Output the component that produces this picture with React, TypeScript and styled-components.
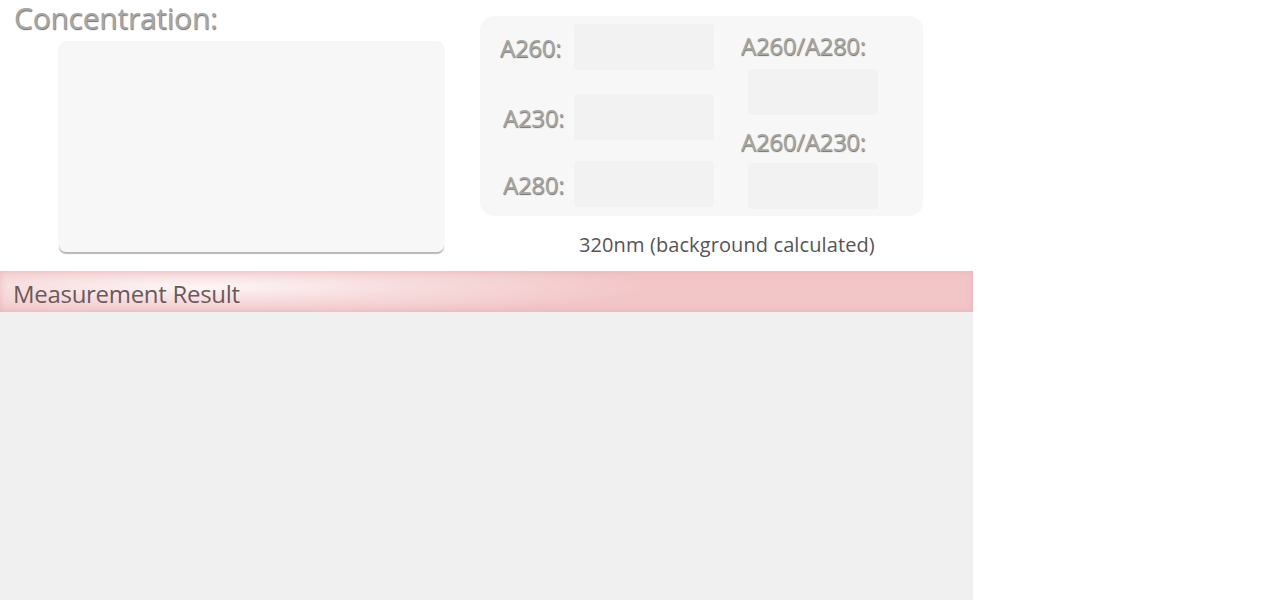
import React from "react";
import styled, { createGlobalStyle } from "styled-components";

const Global = createGlobalStyle`
  html, body { margin: 0; padding: 0; background: #ffffff; }
  body { font-family: "Open Sans", "Liberation Sans", sans-serif; }
`;

const Page = styled.div`
  width: 973px;
  display: flex;
  flex-direction: column;
`;

const Top = styled.div`
  height: 271px;
  display: flex;
  flex-direction: row;
`;

const LeftCol = styled.div`
  width: 444px;
  display: flex;
  flex-direction: column;
`;

const Title = styled.div`
  font-size: 30px;
  line-height: 36px;
  color: #a6a6a6;
  text-shadow: 0.5px 1px 1px #707070;
  padding-left: 14px;
  letter-spacing: -0.25px;
  white-space: nowrap;
`;

const ConcBox = styled.div`
  margin-left: 59px;
  margin-top: 5px;
  width: 385px;
  height: 211px;
  background: #f7f7f7;
  border-radius: 7px;
  box-shadow: 0 2px 1px #b8b8b8;
`;

const RightCol = styled.div`
  margin-left: 36px;
  width: 443px;
  display: flex;
  flex-direction: column;
`;

const Panel = styled.div`
  margin-top: 16px;
  width: 443px;
  height: 200px;
  box-sizing: border-box;
  background: #f7f7f7;
  border-radius: 14px;
  display: flex;
  flex-direction: row;
`;

const AbsCol = styled.div`
  width: 260px;
  display: flex;
  flex-direction: column;
  padding-top: 8px;
`;

const AbsRow = styled.div<{ $gap: number }>`
  display: flex;
  align-items: center;
  height: 46px;
  margin-bottom: ${(p) => p.$gap}px;
`;

const Label = styled.div<{ $indent: number }>`
  font-size: 24px;
  color: #a6a6a6;
  text-shadow: 0.5px 1px 1px #707070;
  letter-spacing: -0.3px;
  padding-left: ${(p) => p.$indent}px;
  white-space: nowrap;
`;

const AbsLabelCell = styled.div`
  width: 94px;
  flex: none;
  display: flex;
`;

const ValueBox = styled.div<{ $w: number; $top?: number }>`
  width: ${(p) => p.$w}px;
  height: 46px;
  margin-top: ${(p) => p.$top ?? 0}px;
  background: #f2f2f2;
  border-radius: 4px;
  flex: none;
`;

const RatioCol = styled.div`
  display: flex;
  flex-direction: column;
`;

const RatioLabel = styled(Label)<{ $top: number }>`
  height: 34px;
  line-height: 34px;
  margin-top: ${(p) => p.$top}px;
`;

const RatioBox = styled(ValueBox)`
  margin-left: 8px;
`;

const Caption = styled.div`
  margin-top: 15px;
  margin-left: 99px;
  font-size: 20px;
  color: #555555;
  letter-spacing: 0.1px;
  white-space: nowrap;
`;

const ResultBar = styled.div`
  height: 41px;
  box-sizing: border-box;
  padding-top: 3px;
  display: flex;
  align-items: center;
  padding-left: 13px;
  background:
    radial-gradient(ellipse 460px 30px at 200px 16px, rgba(255,255,255,0.85), rgba(255,255,255,0.4) 45%, rgba(255,255,255,0) 100%),
    #f2c5c7;
  font-size: 24px;
  color: #6b5a5b;
  letter-spacing: -0.3px;
  box-shadow: inset 0 0 6px rgba(230,160,165,0.55);
`;

const ResultBody = styled.div`
  height: 288px;
  background: #f0f0f0;
`;

export default function App() {
  return (
    <>
      <Global />
      <Page>
        <Top>
          <LeftCol>
            <Title>Concentration:</Title>
            <ConcBox />
          </LeftCol>
          <RightCol>
            <Panel>
              <AbsCol>
                <AbsRow $gap={24}>
                  <AbsLabelCell>
                    <Label $indent={20}>A260:</Label>
                  </AbsLabelCell>
                  <ValueBox $w={140} />
                </AbsRow>
                <AbsRow $gap={21}>
                  <AbsLabelCell>
                    <Label $indent={23}>A230:</Label>
                  </AbsLabelCell>
                  <ValueBox $w={140} />
                </AbsRow>
                <AbsRow $gap={0}>
                  <AbsLabelCell>
                    <Label $indent={23}>A280:</Label>
                  </AbsLabelCell>
                  <ValueBox $w={140} />
                </AbsRow>
              </AbsCol>
              <RatioCol>
                <RatioLabel $indent={1} $top={13}>A260/A280:</RatioLabel>
                <RatioBox $w={130} $top={6} />
                <RatioLabel $indent={1} $top={10}>A260/A230:</RatioLabel>
                <RatioBox $w={130} $top={4} />
              </RatioCol>
            </Panel>
            <Caption>320nm (background calculated)</Caption>
          </RightCol>
        </Top>
        <ResultBar>Measurement Result</ResultBar>
        <ResultBody />
      </Page>
    </>
  );
}
